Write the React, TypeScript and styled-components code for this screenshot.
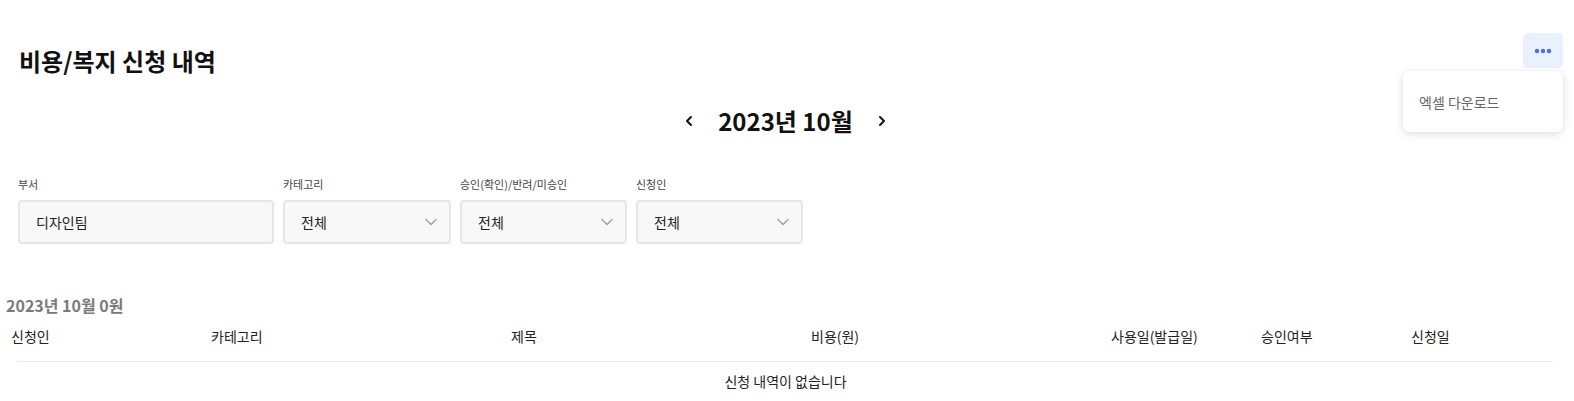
import React from "react";
import styled, { createGlobalStyle } from "styled-components";

const GlobalStyle = createGlobalStyle`
  html, body {
    margin: 0;
    padding: 0;
    background: #ffffff;
  }
  body {
    font-family: "Noto Sans CJK KR", "Noto Sans", sans-serif;
    color: #222;
  }
  * { box-sizing: border-box; }
`;

const Page = styled.div`
  padding: 0 9px 0 6px;
  width: 1574px;
`;

const Header = styled.header`
  display: flex;
  justify-content: space-between;
  align-items: flex-start;
  padding: 33px 2px 0 13px;
`;

const Title = styled.h1`
  margin: 10px 0 0;
  font-size: 24px;
  line-height: 36px;
  font-weight: 700;
  color: #111;
`;

const MoreWrap = styled.div`
  position: relative;
`;

const MoreButton = styled.button`
  width: 40px;
  height: 35px;
  border: none;
  border-radius: 5px;
  background: #e8f1fd;
  display: flex;
  align-items: center;
  justify-content: center;
  padding: 0;
  cursor: pointer;
`;

const Menu = styled.div`
  position: absolute;
  top: 38px;
  right: 0;
  width: 160px;
  height: 61px;
  background: #fff;
  border-radius: 6px;
  box-shadow: 0 2px 8px rgba(0, 0, 0, 0.13), 0 0 1px rgba(0, 0, 0, 0.08);
  display: flex;
  align-items: center;
  padding-left: 16px;
`;

const MenuItem = styled.span`
  font-size: 14px;
  color: #666;
  line-height: 20px;
`;

const MonthNav = styled.div`
  margin-top: 24px;
  display: flex;
  justify-content: center;
  align-items: center;
  gap: 21px;
`;

const NavButton = styled.button`
  width: 16px;
  height: 16px;
  padding: 0;
  border: none;
  background: transparent;
  display: flex;
  align-items: center;
  justify-content: center;
  cursor: pointer;
`;

const MonthText = styled.div`
  font-size: 24px;
  line-height: 36px;
  font-weight: 700;
  color: #111;
`;

const Filters = styled.div`
  margin-top: 37px;
  padding-left: 12px;
  display: flex;
  gap: 9px;
`;

const Field = styled.div<{ $width: number }>`
  width: ${(p) => p.$width}px;
  display: flex;
  flex-direction: column;
`;

const Label = styled.label`
  font-size: 11px;
  line-height: 16px;
  color: #444;
  margin-bottom: 8px;
`;

const Box = styled.div`
  height: 44px;
  border: 2px solid #e6e6e6;
  border-radius: 4px;
  background: #f8f8f8;
  display: flex;
  align-items: center;
  justify-content: space-between;
  padding: 0 12px 0 16px;
  font-size: 14px;
  color: #222;
`;

const Summary = styled.div`
  margin-top: 49px;
  font-size: 16px;
  line-height: 24px;
  font-weight: 700;
  color: #7a7a7a;
`;

const Table = styled.div`
  margin-top: 9px;
`;

const HeadRow = styled.div`
  display: grid;
  grid-template-columns: 200px 300px 300px 300px 150px 150px 1fr;
  padding-bottom: 15px;
`;

const HeadCell = styled.div`
  padding-left: 5px;
  font-size: 14px;
  line-height: 20px;
  color: #222;
`;

const EmptyRow = styled.div`
  margin: 0 12px;
  border-top: 1px solid #e8e8e8;
  padding-top: 9px;
  text-align: center;
  font-size: 14px;
  line-height: 20px;
  color: #222;
`;

const Chevron = ({ dir }: { dir: "left" | "right" }) => (
  <svg width="16" height="16" viewBox="0 0 16 16">
    <polyline
      points={dir === "left" ? "10,4 6,8 10,12" : "6,4 10,8 6,12"}
      fill="none"
      stroke="#111"
      strokeWidth="2"
      strokeLinecap="round"
      strokeLinejoin="round"
    />
  </svg>
);

const DownArrow = () => (
  <svg width="12" height="8" viewBox="0 0 12 8">
    <polyline
      points="1,1.5 6,6.5 11,1.5"
      fill="none"
      stroke="#a3a3a3"
      strokeWidth="1.5"
      strokeLinecap="round"
      strokeLinejoin="round"
    />
  </svg>
);

const Dots = () => (
  <svg width="18" height="6" viewBox="0 0 18 6">
    <circle cx="3" cy="3" r="2.2" fill="#4a6cf0" />
    <circle cx="9" cy="3" r="2.2" fill="#4a6cf0" />
    <circle cx="15" cy="3" r="2.2" fill="#4a6cf0" />
  </svg>
);

const filters = [
  { label: "부서", value: "디자인팀", width: 256, select: false },
  { label: "카테고리", value: "전체", width: 168, select: true },
  { label: "승인(확인)/반려/미승인", value: "전체", width: 167, select: true },
  { label: "신청인", value: "전체", width: 167, select: true },
];

const columns = ["신청인", "카테고리", "제목", "비용(원)", "사용일(발급일)", "승인여부", "신청일"];

export default function App() {
  return (
    <>
      <GlobalStyle />
      <Page>
        <Header>
          <Title>비용/복지 신청 내역</Title>
          <MoreWrap>
            <MoreButton aria-label="more">
              <Dots />
            </MoreButton>
            <Menu>
              <MenuItem>엑셀 다운로드</MenuItem>
            </Menu>
          </MoreWrap>
        </Header>

        <MonthNav>
          <NavButton aria-label="prev">
            <Chevron dir="left" />
          </NavButton>
          <MonthText>2023년 10월</MonthText>
          <NavButton aria-label="next">
            <Chevron dir="right" />
          </NavButton>
        </MonthNav>

        <Filters>
          {filters.map((f) => (
            <Field key={f.label} $width={f.width}>
              <Label>{f.label}</Label>
              <Box>
                <span>{f.value}</span>
                {f.select && <DownArrow />}
              </Box>
            </Field>
          ))}
        </Filters>

        <Summary>2023년 10월 0원</Summary>

        <Table>
          <HeadRow>
            {columns.map((c) => (
              <HeadCell key={c}>{c}</HeadCell>
            ))}
          </HeadRow>
          <EmptyRow>신청 내역이 없습니다</EmptyRow>
        </Table>
      </Page>
    </>
  );
}
